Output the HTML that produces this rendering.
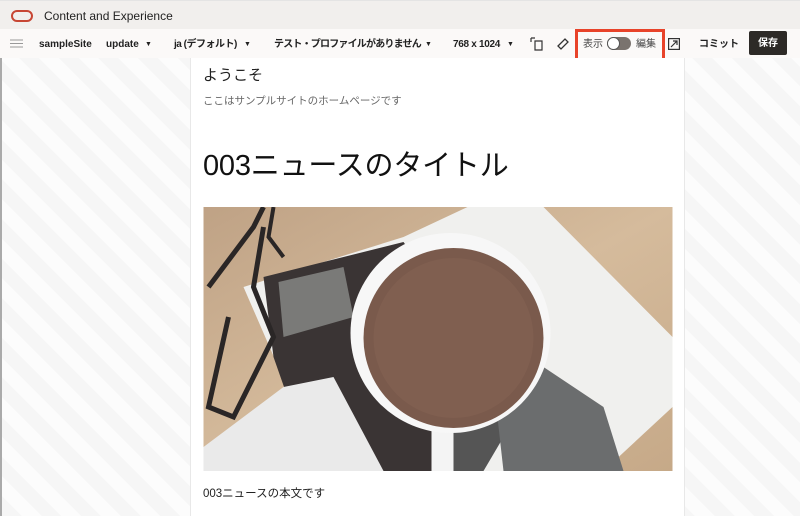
<!DOCTYPE html>
<html><head><meta charset="utf-8"><style>
*{margin:0;padding:0;box-sizing:border-box}
body{width:800px;height:516px;overflow:hidden;font-family:"Liberation Sans","Noto Sans CJK JP",sans-serif;background:#fff;position:relative}
#top{position:absolute;left:0;top:0;width:800px;height:29px;background:#f1efed;border-top:1px solid #e4e4e4}
#logo{position:absolute;left:11px;top:9px;width:22px;height:12px;border:2.5px solid #c74634;border-radius:6px}
#title{position:absolute;left:44px;top:8px;font-size:12px;color:#222}
#tb{position:absolute;left:0;top:29px;width:800px;height:29px;background:#fbf9f8;font-size:10px;font-weight:bold;color:#222}
#tb span{position:absolute;top:10px;white-space:nowrap;line-height:12px}
.car{font-size:7px}
#bg{position:absolute;left:0;top:58px;width:800px;height:458px;border-left:2px solid #aaa;background:repeating-linear-gradient(45deg,#f6f6f6 0 14px,#fcfcfc 14px 28px)}
#page{position:absolute;left:190px;top:58px;width:495px;height:458px;background:#fff;border-left:1px solid #e8e8e8;border-right:1px solid #e8e8e8}
.t{position:absolute;left:12px;color:#222;white-space:nowrap}
#red{position:absolute;left:575px;top:29px;width:90px;height:33px;border:3px solid #e8432a}
#save{position:absolute;left:749px;top:31px;width:38px;height:24px;background:#2d2a27;border-radius:2px;color:#fff;font-size:10px;font-weight:bold;text-align:center;line-height:26px}
</style></head><body>
<div id="top"><div id="logo"></div><div id="title">Content and Experience</div></div>
<div id="tb">
<svg style="position:absolute;left:10px;top:10px" width="13" height="9"><path d="M0 1h13M0 4.5h13M0 8h13" stroke="#999" stroke-width="1"/></svg>
<span style="left:39px">sampleSite</span>
<span style="left:106px">update</span><span class="car" style="left:145px">▼</span>
<span style="left:174px;letter-spacing:-0.5px">ja (デフォルト)</span><span class="car" style="left:244px">▼</span>
<span style="left:274px;letter-spacing:-0.8px">テスト・プロファイルがありません</span><span class="car" style="left:425px">▼</span>
<span style="left:453px;letter-spacing:-0.3px">768 x 1024</span><span class="car" style="left:507px">▼</span>
<svg style="position:absolute;left:530px;top:8px" width="14" height="14"><path d="M1 1h4M1 1v4M5 4h7v9H5z" fill="none" stroke="#333" stroke-width="1.2"/></svg>
<svg style="position:absolute;left:556px;top:8px" width="14" height="14"><path d="M2 9l7-7 3 3-7 7z" fill="none" stroke="#333" stroke-width="1.3"/></svg>
<span style="left:583px;font-weight:normal;color:#444;font-size:10px">表示</span>
<div style="position:absolute;left:607px;top:8px;width:24px;height:13px;border-radius:7px;background:#7a736e"></div>
<div style="position:absolute;left:607px;top:8px;width:13px;height:13px;border-radius:7px;background:#fff;border:1.3px solid #555"></div>
<span style="left:636px;font-weight:normal;color:#444;font-size:10px">編集</span>
<svg style="position:absolute;left:668px;top:9px" width="12" height="12"><rect x=".6" y=".6" width="10.8" height="10.8" fill="none" stroke="#333" stroke-width="1.2"/><path d="M3 9l6-6M5 3h4v4" fill="none" stroke="#333" stroke-width="1.2"/></svg>
<span style="left:699px">コミット</span>
</div>
<div id="red"></div>
<div id="save">保存</div>
<div id="bg"></div>
<div id="page">
<div class="t" style="top:6px;font-size:15px">ようこそ</div>
<div class="t" style="top:35px;font-size:10.5px;color:#666">ここはサンプルサイトのホームページです</div>
<div class="t" style="top:84px;font-size:29px;color:#111;letter-spacing:-0.2px">003ニュースのタイトル</div>
<svg style="position:absolute;left:12px;top:149px" width="470" height="264" viewBox="0 0 469 264">
<defs><linearGradient id="w" x1="0" y1="0" x2="1" y2="1"><stop offset="0" stop-color="#bfa285"/><stop offset=".5" stop-color="#d5bb9c"/><stop offset="1" stop-color="#c6a988"/></linearGradient></defs>
<rect width="469" height="264" fill="url(#w)"/>
<polygon points="264,0 340,0 469,130 469,200 400,264 120,264 40,80 200,30" fill="#f0f0ee"/>
<polygon points="60,70 200,35 260,120 230,264 110,264 70,150" fill="#3a3434"/>
<polygon points="75,75 140,60 150,110 80,130" fill="#7a7a78"/>
<polygon points="270,100 290,90 300,230 280,264 230,264" fill="#555"/>
<polygon points="290,175 340,160 400,200 420,264 300,264" fill="#6b6d6e"/>
<polygon points="0,240 80,180 130,170 180,264 0,264" fill="#eaeaea"/>
<path d="M5 80L50 20L60 0M60 20l-10 60 20 50-40 80-25-10 20-90" fill="none" stroke="#2a2626" stroke-width="5"/>
<path d="M70 0l-5 30 15 20" fill="none" stroke="#2a2626" stroke-width="4"/>
<rect x="228" y="170" width="22" height="94" fill="#f4f4f4"/>
<circle cx="247" cy="126" r="100" fill="#f7f7f7"/>
<circle cx="250" cy="131" r="90" fill="#7a5a4c"/>
<circle cx="250" cy="131" r="80" fill="#805f50"/>
</svg>
<div class="t" style="top:427px;font-size:11.5px">003ニュースの本文です</div>
</div>
</body></html>
